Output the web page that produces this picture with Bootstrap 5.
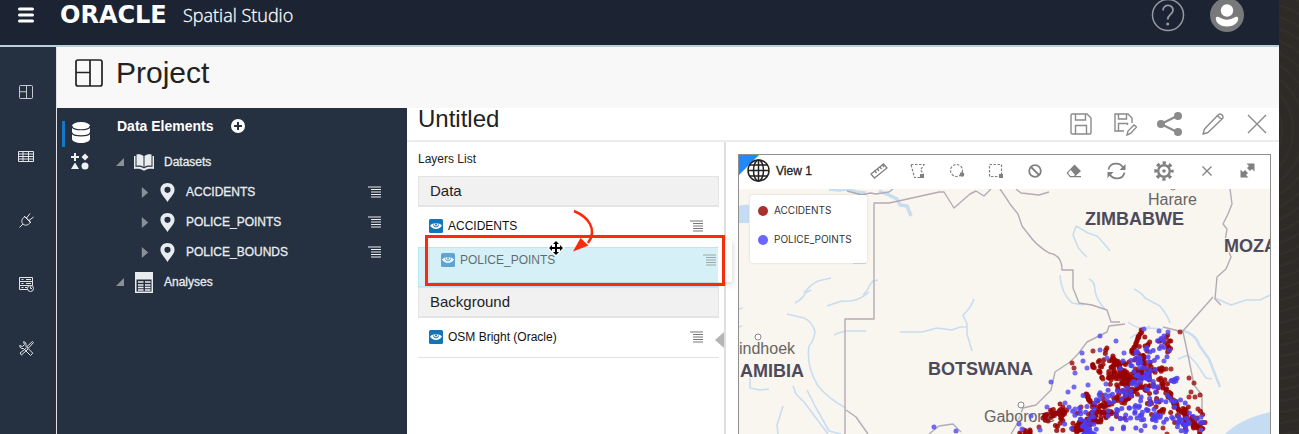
<!DOCTYPE html>
<html lang="en">
<head>
<meta charset="utf-8">
<meta name="viewport" content="width=device-width, initial-scale=1">
<title>Oracle Spatial Studio</title>
<link rel="stylesheet" href="https://cdn.jsdelivr.net/npm/bootstrap@5.3.0/dist/css/bootstrap.min.css">
<style>
  body {
    font-family: "Liberation Sans", Arial, sans-serif;
    font-size: 12px; line-height: 16px; color: #222;
    padding-right: 20px;
    background: #2e2a27 repeating-radial-gradient(circle at right 60px top 130px, transparent 0 8px, #33302c 10px 11px);
  }
  svg { display: block; flex: none; }
  button { background: none; border: 0; padding: 0; color: inherit; display: flex; align-items: center; justify-content: center; }
  .topbar { background: #1c2433; color: #fff; border-bottom: 2px solid #b9cfdc; padding-bottom: 15px; }
  .topbar-row { height: 30px; padding-left: 18px; padding-right: 35px; }
  .wordmark { font: bold 24px/32px "DejaVu Sans", sans-serif; margin-left: 26px; min-width: 116px; }
  .product { font: 300 18px/32px "Open Sans", sans-serif; margin-left: 7px; -webkit-text-stroke: .3px; }
  .account { gap: 25px; }
  .rail { width: 57px; background: #253040; border-right: 1px solid #dfe3e6; color: #e2e6ea; padding-top: 13px; }
  .rail button { height: 64px; width: 52px; }
  .page-head { height: 61px; background: #f8f8f8; padding: 0 18px 9px; gap: 13px; color: #222; }
  .page-head h1 { font-size: 30px; line-height: 36px; font-weight: 400; }
  .elements { width: 350px; background: #253040; color: #e9ecef; flex: none; }
  .tabs-strip { width: 46px; padding-top: 11px; }
  .tabs-strip button { height: 29px; width: 46px; color: #eef0f2; }
  .tabs-strip .current { border-left: 3px solid #1277c4; height: 26px; width: 41px; margin: 2px 0 0 5px; padding: 0 7px 3px 0; }
  .elements h2 { font-size: 14px; line-height: 16px; font-weight: 700; color: #fff; }
  .tree-head { padding: 10px 0 13px 14px; gap: 18px; }
  .tree-row { height: 30px; padding-left: 13px; padding-right: 26px; -webkit-text-stroke: .3px; }
  .tree-row.leaf { padding-left: 38px; }
  .twisty { color: #8a9097; width: 8px; }
  .title-row { height: 34px; border-bottom: 2px solid #ececec; padding-left: 11px; color: #8b8b8b; }
  .title-row h2 { font-size: 24px; line-height: 22px; font-weight: 400; color: #222; align-self: flex-start; }
  .title-row button { width: 44px; height: 31px; }
  .layers { width: 319px; border-right: 2px solid #dedede; padding: 9px 5px 0 11px; flex: none; position: relative; }
  .layers h3 { font-size: 12px; line-height: 16px; font-weight: 400; padding-bottom: 9px; }
  .group-head { height: 31px; background: #f1f1f1; border: 1px solid #e4e4e4; border-bottom-width: 2px; font-size: 15px; padding-left: 11px; padding-bottom: 1px; }
  .layer { height: 40px; padding: 0 16px 2px 11px; color: #111; }
  .layer .eye { margin-right: 5px; }
  .layer > .menu { color: #777; }
  .drop-target { height: 40px; background: #d5f0f7; border: 1px solid #b9e6ef; border-right-color: #fff; position: relative; }
  .dragged { position: absolute; left: 11px; top: -8px; width: 302px; height: 42px; padding-left: 11px; opacity: .6; box-shadow: 1px 2px 5px #8888; background: linear-gradient(#fff 0 7px, transparent 7px) , linear-gradient(90deg, transparent 289px, #fff 289px); }
  .callout-box { position: absolute; left: 6px; top: -13px; width: 300px; height: 51px; border: 3px solid #fa2a0a; }
  .callout-arrow { position: absolute; left: 150px; top: -40px; }
  .pointer { position: absolute; left: 129px; top: -8px; }
  .collapse-tab { position: absolute; right: 0; top: 190px; color: #b5b5b5; }
  .view-pane { padding: 12px 8px 0 12px; }
  .view-box { border: 1px solid #8f8f8f; border-bottom: 0; position: relative; min-height: 0; }
  .view-bar { height: 34px; padding: 0 3px 3px 8px; color: #808080; position: relative; }
  .view-bar::before { content: ""; position: absolute; left: 0; top: 0; border: 10px solid transparent; border-top-color: #2189fb; border-left-color: #2189fb; }
  .view-bar label { color: #222; -webkit-text-stroke: .3px; margin-left: 6px; }
  .view-bar svg { position: relative; }
  .view-bar button { width: 39px; height: 30px; }
  .view-bar .mid { width: 47px; }
  .view-bar .end { width: 40px; }
  .map-area { position: relative; background: #f9f5ef; overflow: hidden; min-height: 0; }
  .legend-card { position: absolute; left: 11px; top: 6px; width: 117px; height: 68px; background: #fff; border-radius: 3px; box-shadow: 0 0 3px #0002; padding: 1px 8px; font: 10px/29px Inter, sans-serif; color: #333; }
  .legend-card ul { margin: 0; padding: 0; list-style: none; }
  .legend-card li { display: flex; align-items: center; gap: 6px; }
  .dot { width: 10px; height: 10px; border-radius: 50%; }
  .map-label text { font-family: "Liberation Sans", Arial, sans-serif; stroke: #f9f5ef; stroke-width: 2; paint-order: stroke; }
  .country { font-size: 18px; font-weight: 700; fill: #4c4a5b; }
  .town { font-size: 16px; fill: #666; }
</style>
</head>
<body class="vh-100 overflow-hidden d-flex flex-column">

<svg width="0" height="0" class="position-absolute" aria-hidden="true">
  <symbol id="i-layout" viewBox="0 0 28 28"><g fill="none" stroke="currentColor" stroke-width="1.700"><rect x="1" y="1" width="26" height="26" rx="2"/><path d="M15 1v26M1 13.500h14"/></g></symbol>
  <symbol id="i-menu" viewBox="0 0 13 12"><path d="M0 1h13M3 3.500h10M3 6h10M3 8.500h10M3 11h10" stroke="currentColor" stroke-width="1.200"/></symbol>
  <symbol id="i-eye" viewBox="0 0 14 14"><rect width="14" height="14" rx="1.500" fill="#1474b8"/><path d="M1 6.500C3.500 3.500 10.500 3.500 13 6.500 10.500 11 3.500 11 1 6.500z" fill="#fff"/><path d="M4.500 5.500a2.500 2.500 0 0 0 5 0" fill="none" stroke="#1474b8"/><circle cx="7" cy="5.500" r="1" fill="#1474b8"/></symbol>
  <symbol id="i-pin" viewBox="0 0 16 22"><path d="M8 1C3.700 1 .6 4 .6 8c0 4.500 5 8.500 7.400 13 2.400-4.500 7.400-8.500 7.400-13 0-4-3.100-7-7.400-7zm0 4a3.200 3.200 0 1 1 0 6.400A3.200 3.200 0 0 1 8 5z" fill="currentColor"/></symbol>
  <symbol id="i-closed" viewBox="0 0 7 12"><path d="M0 0l7 6-7 6z" fill="currentColor"/></symbol>
  <symbol id="i-open" viewBox="0 0 8 8"><path d="M8 0v8H0z" fill="currentColor"/></symbol>
</svg>

<header class="topbar">
  <div class="topbar-row d-flex align-items-center">
    <button aria-label="Menu"><svg width="16" height="16" viewBox="0 0 16 16"><path d="M1.500 2h13M1.500 8h13M1.500 14h13" stroke="currentColor" stroke-width="3" stroke-linecap="round"/></svg></button>
    <span class="wordmark">ORACLE</span><span class="product">Spatial Studio</span>
    <div class="account ms-auto d-flex align-items-center">
      <button aria-label="Help"><svg width="34" height="34" viewBox="0 0 34 34" fill="none" stroke="#959aa1" stroke-width="1.500"><circle cx="17" cy="17" r="15.500"/><path d="M12 12.500c0-7 10.500-6.500 10 0-.4 4-5.300 4-5.300 9" stroke-width="1.800"/><circle cx="16.700" cy="26" r=".8" fill="#959aa1"/></svg></button>
      <button aria-label="Account"><svg width="34" height="34" viewBox="0 0 34 34"><circle cx="17" cy="17" r="17" fill="#77797b"/><circle cx="17" cy="12.500" r="6.200" fill="#fff"/><path d="M5.800 20.500c0-2 2-2 3.500-1.200 5 3.200 10.400 3.200 15.400 0 1.500-.8 3.500-.8 3.500 1.200 0 4.500-5 8-11.200 8s-11.200-3.500-11.200-8z" fill="#fff"/></svg></button>
    </div>
  </div>
</header>

<div class="d-flex flex-fill overflow-hidden">
  <nav class="rail d-flex flex-column flex-shrink-0" aria-label="Sections">
    <button aria-label="Projects"><svg width="14" height="14"><use href="#i-layout"/></svg></button>
    <button aria-label="Datasets"><svg width="16" height="11" viewBox="0 0 16 11"><path d="M.5.500h15v10H.5zM.5 3h15M.5 5.500h15M.5 8h15M5 .5v10M10.500.500v10" fill="none" stroke="currentColor"/></svg></button>
    <button aria-label="Connections"><svg width="15" height="15" viewBox="0 0 15 15" fill="none" stroke="currentColor" stroke-linejoin="round"><path d="M.5 14.500L4 11M6 3.500L11.500 9C9.500 12.500 6 13 4 11S2.500 5.500 6 3.500zM7.500 5l3.500-4.500M10 7.500l4.500-3.500M5 3l7 7"/></svg></button>
    <button aria-label="Jobs"><svg width="15" height="15" viewBox="0 0 15 15" fill="none" stroke="currentColor"><path d="M.5.500h13v4H.5zM.5 4.500h13v4H.5zM9 12.500H.5v-4M2.500 2.500h2M7 2.500h5M2.500 6.500h2M7 6.500h5M2.500 10.500h2M6 10.500h2"/><circle cx="11.500" cy="11.500" r="3" fill="#253040"/><path d="M11.500 9.500v2h1.500"/></svg></button>
    <button aria-label="Tools"><svg width="15" height="15" viewBox="0 0 15 15" fill="none" stroke="currentColor"><path d="M13.500.500L8 5.500l1.500 1.500 5-5.500zM7.500 7L1 12l1.500 2L9 8M4.500.700L5.500 3.500 3.500 5.500.700 4.500c0 2 1.500 3.500 3.800 3l7 7 2.300-2.300-7-7C7.500 2.500 6.500.700 4.500.700z"/></svg></button>
  </nav>

  <main class="d-flex flex-column flex-fill overflow-hidden">
    <div class="page-head d-flex align-items-center">
      <svg width="28" height="28"><use href="#i-layout"/></svg>
      <h1 class="m-0">Project</h1>
    </div>

    <div class="d-flex flex-fill overflow-hidden">
      <aside class="elements d-flex">
        <div class="tabs-strip d-flex flex-column">
          <button class="current" aria-label="Data"><svg width="18" height="21" viewBox="0 0 18 21"><path d="M0 4v13c0 2.200 4 4 9 4s9-1.800 9-4V4z" fill="#fff"/><ellipse cx="9" cy="4" rx="9" ry="4" fill="#fff"/><path d="M0 4c0 5 18 5 18 0M0 10.500c0 4.500 18 4.500 18 0" fill="none" stroke="#253040" stroke-width="1.200"/></svg></button>
          <button aria-label="Functions"><svg width="18" height="17" viewBox="0 0 18 17" fill="currentColor"><path d="M3 0h2v3h3v2H5v3H3V5H0V3h3zM14 .500L17.500 4 14 7.500 10.500 4zM4 9.500L8 16H0z"/><circle cx="14" cy="13" r="3.500"/></svg></button>
        </div>
        <div class="flex-fill">
          <div class="tree-head d-flex align-items-center">
            <h2 class="m-0">Data Elements</h2>
            <button aria-label="Add data"><svg width="14" height="14" viewBox="0 0 14 14"><circle cx="7" cy="7" r="7" fill="#fff"/><path d="M7 3v8M3 7h8" stroke="#253040" stroke-width="2"/></svg></button>
          </div>
          <div class="tree-row d-flex align-items-center"><svg class="twisty" width="8" height="8"><use href="#i-open"/></svg>
            <svg class="ms-2 me-2" width="24" height="17" viewBox="0 0 24 17"><path d="M2 2h1.500v11c4-.5 6.500 0 8.500 1.500 2-1.500 4.500-2 8.500-1.500V2H22v13c-4-.5-8 0-9 1.500h-2C10 15 6 14.500 2 15zM4.500.500c3-.5 5 0 7 1.500v11c-2-1.300-4-1.700-7-1.300zM19.500.500c-3-.5-5 0-7 1.500v11c2-1.300 4-1.700 7-1.300z" fill="currentColor"/></svg>
            <span>Datasets</span></div>
          <div class="tree-row leaf d-flex align-items-center"><svg width="6" height="11" class="twisty"><use href="#i-closed"/></svg><svg class="ms-2 me-2" width="21" height="21"><use href="#i-pin"/></svg><span>ACCIDENTS</span><button class="ms-auto" aria-label="ACCIDENTS menu"><svg width="13" height="12"><use href="#i-menu"/></svg></button></div>
          <div class="tree-row leaf d-flex align-items-center"><svg width="6" height="11" class="twisty"><use href="#i-closed"/></svg><svg class="ms-2 me-2" width="21" height="21"><use href="#i-pin"/></svg><span>POLICE_POINTS</span><button class="ms-auto" aria-label="POLICE_POINTS menu"><svg width="13" height="12"><use href="#i-menu"/></svg></button></div>
          <div class="tree-row leaf d-flex align-items-center"><svg width="6" height="11" class="twisty"><use href="#i-closed"/></svg><svg class="ms-2 me-2" width="21" height="21"><use href="#i-pin"/></svg><span>POLICE_BOUNDS</span><button class="ms-auto" aria-label="POLICE_BOUNDS menu"><svg width="13" height="12"><use href="#i-menu"/></svg></button></div>
          <div class="tree-row d-flex align-items-center"><svg class="twisty" width="8" height="8"><use href="#i-open"/></svg>
            <svg class="ms-2 me-2" width="24" height="21" viewBox="0 0 24 21"><path d="M3 0h18v21H3zM4.500 7.500v12h15v-12z" fill="currentColor" fill-rule="evenodd"/><path d="M6 10h5.500M13 10h5.500M6 13h5.500M13 13h5.500M6 15.500h5.500M13 15.500h5.500M6 18h5.500M13 18h5.500" stroke="currentColor" stroke-width="1.500"/></svg>
            <span>Analyses</span></div>
        </div>
      </aside>

      <section class="d-flex flex-column flex-fill bg-white overflow-hidden">
        <div class="title-row d-flex align-items-center flex-shrink-0">
          <h2 class="mb-0 me-auto">Untitled</h2>
          <button aria-label="Save"><svg width="22" height="22" viewBox="0 0 22 22" fill="none" stroke="currentColor" stroke-width="1.400"><path d="M1 2.500Q1 1 2.500 1H17l4 4v14.500q0 1.500-1.500 1.500h-17Q1 21 1 19.500zM5.500 1v6h10V1M5.500 21v-8.500h11V21"/></svg></button>
          <button aria-label="Save as"><svg width="23" height="23" viewBox="0 0 23 23" fill="none" stroke="currentColor" stroke-width="1.400"><path d="M10 18H1V1h13l4 4v5M4.500 1v5h8V1M4.500 18v-7.500h9V12M13 22l1-4 6-6 2.500 2-6 6.500z"/></svg></button>
          <button aria-label="Share"><svg width="25" height="24" viewBox="0 0 25 24"><path d="M21 3.500L4 12l17 8.500" fill="none" stroke="currentColor" stroke-width="2.200"/><g fill="currentColor"><circle cx="21" cy="4" r="4"/><circle cx="4" cy="12" r="4"/><circle cx="21" cy="20" r="4"/></g></svg></button>
          <button aria-label="Edit"><svg width="22" height="22" viewBox="0 0 22 22" fill="none" stroke="currentColor" stroke-width="1.400" stroke-linejoin="round"><path d="M1 21l1.500-5L16.500 1.500q1.500-1 3 0l1 1q1 1.500 0 3L6 19.500zM15.500 2.500L19.500 6.500"/></svg></button>
          <button aria-label="Close"><svg width="20" height="20" viewBox="0 0 20 20"><path d="M1 1l18 18M19 1L1 19" stroke="currentColor" stroke-width="1.400"/></svg></button>
        </div>

        <div class="d-flex flex-fill overflow-hidden">
          <div class="layers">
            <h3 class="m-0">Layers List</h3>
            <div class="group-head d-flex align-items-center">Data</div>
            <div class="layer d-flex align-items-center"><svg class="eye" width="14" height="14"><use href="#i-eye"/></svg>ACCIDENTS<button class="menu ms-auto" aria-label="ACCIDENTS layer menu"><svg width="13" height="12"><use href="#i-menu"/></svg></button></div>
            <div class="drop-target">
              <div class="dragged layer d-flex align-items-center"><svg class="eye" width="14" height="14"><use href="#i-eye"/></svg>POLICE_POINTS<button class="menu ms-auto" aria-label="POLICE_POINTS layer menu"><svg width="13" height="12"><use href="#i-menu"/></svg></button></div>
              <div class="callout-box"></div>
              <svg class="callout-arrow" width="30" height="45" viewBox="0 0 30 45"><path d="M5 3C19 9 29 21 19 35" fill="none" stroke="#fa2a0a" stroke-width="2.500"/><path d="M4 43.500l7.500-13.500 8 7.500z" fill="#fa2a0a"/></svg>
              <svg class="pointer" width="16" height="16" viewBox="-8 -8 16 16"><path d="M0-7l3 3H1v3h3v-2l3 3-3 3V1H1v3h2L0 7l-3-3h2V1h-3v2l-3-3 3-3v2h3v-3h-2z" stroke="#fff" stroke-width="2" paint-order="stroke"/></svg>
            </div>
            <div class="group-head d-flex align-items-center">Background</div>
            <div class="layer d-flex align-items-center border-bottom"><svg class="eye" width="14" height="14"><use href="#i-eye"/></svg>OSM Bright (Oracle)<button class="menu ms-auto" aria-label="OSM Bright layer menu"><svg width="13" height="12"><use href="#i-menu"/></svg></button></div>
            <button class="collapse-tab" aria-label="Collapse layers"><svg width="9" height="16" viewBox="0 0 9 16"><path d="M9 0v16L0 8z" fill="currentColor"/></svg></button>
          </div>

          <div class="view-pane d-flex flex-column flex-fill overflow-hidden">
            <div class="view-box d-flex flex-column flex-fill">
              <div class="view-bar d-flex align-items-center flex-shrink-0">
                <svg width="23" height="23" viewBox="0 0 23 23" fill="none" stroke="#222" stroke-width="1.500"><circle cx="11.500" cy="11.500" r="10.500" fill="#fff8"/><ellipse cx="11.500" cy="11.500" rx="5" ry="10.500"/><path d="M11.500 1v21M1 11.500h21M2.500 6h18M2.500 17h18"/></svg>
                <label class="me-auto">View 1</label>
                <button aria-label="Measure"><svg width="18" height="16" viewBox="0 0 18 16" fill="none" stroke="currentColor" stroke-width="1.300"><path d="M1 11L13.500 1 17 5 4.500 15zM5 8l1.500 2M7.500 6L9 8M10 4l1.500 2M12.500 2L14 4"/></svg></button>
                <button aria-label="Select by polygon"><svg width="16" height="16" viewBox="0 0 16 16"><path d="M1 1.500h13L10.500 7l3 4M10 14.500H4.500L1 1.500" fill="none" stroke="currentColor" stroke-width="1.200" stroke-dasharray="2.500 1.500"/><path d="M10 11h4v4h-4z" fill="currentColor"/></svg></button>
                <button aria-label="Select by circle"><svg width="16" height="16" viewBox="0 0 16 16"><circle cx="7.500" cy="7.500" r="6" fill="none" stroke="currentColor" stroke-width="1.200" stroke-dasharray="2.500 1.500"/><circle cx="13" cy="11.500" r="2.300" fill="currentColor"/></svg></button>
                <button aria-label="Select by rectangle"><svg width="16" height="16" viewBox="0 0 16 16"><path d="M1.500 1.500h12v12h-12z" fill="none" stroke="currentColor" stroke-width="1.200" stroke-dasharray="2.500 1.500"/><path d="M11 11h4v4h-4z" fill="currentColor"/></svg></button>
                <button aria-label="Clear selection"><svg width="14" height="14" viewBox="0 0 14 14" fill="none" stroke="currentColor" stroke-width="1.800"><circle cx="7" cy="7" r="5.800"/><path d="M3 3l8 8"/></svg></button>
                <button aria-label="Erase"><svg width="16" height="14" viewBox="0 0 16 14"><path d="M8.500.500L15 7 9.500 12H15v1.300H4L.5 9z" fill="currentColor"/><path d="M4.800 6L9 11l-1.200 1H4.500L2 9z" fill="#fff"/></svg></button>
                <button class="mid" aria-label="Refresh"><svg width="19" height="18" viewBox="0 0 19 18"><path d="M1.500 7.500C3 0 13 0 16 5.500M17.500 10.500C16 18 6 18 3 12.500" fill="none" stroke="currentColor" stroke-width="1.700"/><path d="M18.500 2v6h-6zM.5 16v-6h6z" fill="currentColor"/></svg></button>
                <button class="mid" aria-label="Settings"><svg width="20" height="20" viewBox="-10 -10 20 20" fill="none" stroke="currentColor"><circle r="5.800" stroke-width="2.400"/><circle r="8.200" stroke-width="3" stroke-dasharray="3.200 3.240" stroke-dashoffset="1.600"/><circle r="1.800" fill="currentColor" stroke="none"/></svg></button>
                <button class="end" aria-label="Close view"><svg width="10" height="10" viewBox="0 0 10 10"><path d="M.5.500l9 9M9.500.500l-9 9" stroke="currentColor" stroke-width="1.300"/></svg></button>
                <button class="end" aria-label="Expand view"><svg width="15" height="15" viewBox="0 0 15 15" fill="currentColor"><path d="M6.500.500h8v8L12 6l-2 2-3-3 2-2zM.5 6.500v8h8L6 12l2-2-3-3-2 2z"/></svg></button>
              </div>

              <div class="map-area flex-fill">
                <svg class="w-100 h-100" viewBox="739 189 531 245" preserveAspectRatio="xMinYMin slice" role="img" aria-label="Map of southern Africa">
                  <g fill="#c5dcf2"><path d="M739 206q5-2 10-1v18h-10zM1225 434q15-15 45-22v22zM853 263h13v1h-13z"/></g>
                  <g fill="none" stroke="#c8def0" stroke-width="1.600" stroke-linejoin="round">
                    <path d="M829 189l10 1 8-1 9 3 10 1M879 191l10 4 8 4 3 6 7 1 4 10" stroke-width="3.500"/>
                    <path d="M804 293q7-9 14-12l13-3M795 303q9-5 10-10l6-3M863 295q6-6 6-9l4-5 5-1M827 306l15-5q15 2 27-9M787 314l17 4q8 3 11 14-1 8-6 14-3 20 9 40 12 14 28 22M834 335q8-4 15-4h17M900 332h22l15-4 15 2 8-3h7M974 299q-3 9-11 16l4 9v10l5 17M793 386l3 8 8 8 24 32M807 390l8 16 14 25 12 3M783 406l-6 19 1 9M750 377v11l10 2 9-1M739 309l4-1M739 327l3-1"/>
                    <path d="M1076 226l-3 9 4 10q2 5 10 12M1076 226l12 7 9 3q6 6 13 15M1060 275q1 18 12 28l12 2M1089 279q6 2 6 12 2 10 10 18M1134 289q8 4 11 9l15 8q8 10 10 17M1215 298l16 7 15-5h14l10-5M1128 322q10 8 20 6l15 1M1130 338l20-12M1178 359l10-4 8 8 10 15 6 1"/>
                    <path d="M1181 330q15 4 18 15l10 14 11 28" stroke-width="2.500"/>
                  </g>
                  <g fill="none" stroke="#b3acb6" stroke-width="1.400" stroke-linejoin="round">
                    <path d="M847 191l15 4 8-2 6 1 13-2 4-3M845 434V319h29V203h15l14-3 36-8h5l10 16 16-14 6-3 8 5 7-7M1000 189q7 10 10 15l8 10 4 12 7 9q7 10 20 18 13 2 13 17h11v18l6 15 13 2 15 5 4 12h9M1016 189l5 4 18 2 10-3M1230 189l2 15-4 10-5 10 4 5-2 12 6 16-5 12-9 8-2 22 6 6M1213 297l-31 35M1163 327l20 5 6 28 5 25 8 10v39M1125 324l-16 2-2 6-20 10-9 12-8 8-15 10-4 18-15 15-13 3-6 16-6 10M846 410l10 7 12 17M929 434l10-8 14-2 8 8"/>
                  </g>
                  <g class="map-label">
                    <circle cx="1173" cy="187" r="3" fill="none" stroke="#888"/><circle cx="758" cy="337" r="3" fill="#fff" stroke="#888"/><circle cx="1021" cy="405" r="3" fill="#fff" stroke="#888"/>
                    <text class="town" x="1148" y="205">Harare</text>
                    <text class="country" x="1085" y="225">ZIMBABWE</text>
                    <text class="country" x="1224" y="252">MOZA</text>
                    <text class="town" x="739" y="354">indhoek</text>
                    <text class="country" x="740" y="377">AMIBIA</text>
                    <text class="country" x="928" y="375">BOTSWANA</text>
                    <text class="town" x="984" y="422">Gaborone</text>
                  </g>
                  <g id="points"></g>
                </svg>
                <div class="legend-card">
                  <ul>
                    <li><span class="dot" style="background:#a83030"></span>ACCIDENTS</li>
                    <li><span class="dot" style="background:#6a66ff"></span>POLICE_POINTS</li>
                  </ul>
                </div>
              </div>
            </div>
          </div>
        </div>
      </section>
    </div>
  </main>
</div>

<script src="https://cdn.jsdelivr.net/npm/bootstrap@5.3.0/dist/js/bootstrap.bundle.min.js"></script>
<script>
  // Point runs: x1, y1, x2, y2, spread, count. Points lie along each run, scattered by the spread.
  const accidents = [
    [1142,331,1131,352,1,16], [1110,362,1124,382,9,70], [1120,388,1146,370,5,30], [1086,394,1090,402,1,8],
    [1092,407,1130,396,4,34], [1125,396,1142,388,4,16], [1098,412,1112,412,2,10], [1094,416,1076,431,5,44],
    [1046,416,1064,414,4,28], [1064,404,1060,432,4,16], [1140,350,1146,378,8,28], [1160,378,1175,404,3,24],
    [1176,408,1196,426,9,44], [1164,338,1168,350,5,12], [1142,384,1160,392,6,12], [1195,422,1201,430,5,14],
    [1020,432,1035,434,4,12], [1150,404,1160,410,6,12], [1148,338,1148,348,3,5], [1112,356,1113,360,1,4],
    [1092,364,1094,368,1,5], [1100,366,1104,376,3,8], [1140,364,1164,372,5,14], [1080,420,1120,414,6,24],
    [1104,353,1107,348,1,3]
  ];
  const police = [
    [1136,358,1156,352,8,16], [1158,336,1168,352,6,10], [1136,370,1154,384,8,22], [1130,384,1154,376,6,12],
    [1150,404,1160,420,9,16], [1084,428,1094,434,6,22], [1070,420,1100,414,10,20], [1110,416,1150,414,10,28],
    [1112,396,1146,392,8,14], [1172,381,1176,380,2,6], [1174,416,1186,434,7,20], [1086,412,1116,390,9,12],
    [1120,362,1146,362,6,8], [1160,402,1178,400,6,12], [1190,420,1202,422,6,7], [1130,422,1150,424,8,8]
  ];
  const lone = {
    a: [[1180,332],[1093,351],[1072,363],[1074,368],[1189,378],[1194,383],[1191,392],[1189,397],[1200,395],[1195,397],[1169,351],[1166,369],[1171,369],[1103,379],[1102,395],[1081,407],[1198,409],[1163,428],[1167,434],[1039,427]],
    b: [[1144,329],[1159,331],[1168,332],[1100,336],[1116,341],[1082,353],[1100,350],[1083,361],[1087,368],[1075,373],[1107,358],[1124,353],[1051,382],[1068,392],[1074,387],[1088,385],[1106,384],[1047,407],[1065,403],[1075,409],[1031,416],[1019,424],[1022,429],[1040,430],[934,427],[956,431],[1164,361],[1107,399],[1201,430],[1201,417]]
  };
  let seed = 11;
  const rnd = () => (seed = (seed * 16807) % 2147483647) / 2147483647;
  const jitter = s => (rnd() + rnd() - 1) * s * 1.5;
  const spread = runs => runs.flatMap(([x1, y1, x2, y2, s, n]) => Array.from({length: n}, (_, i) => {
    const t = n > 1 ? i / (n - 1) : 0;
    return [x1 + (x2 - x1) * t + jitter(s), y1 + (y2 - y1) * t + jitter(s)];
  }));
  const all = [
    ...spread(accidents).map(p => [...p, '#990000']), ...lone.a.map(p => [...p, '#a01818']),
    ...spread(police).map(p => [...p, '#4b3df0']), ...lone.b.map(p => [...p, '#5a50f5'])
  ];
  document.getElementById('points').innerHTML = all.map(([x, y, c]) =>
    `<circle cx="${x.toFixed(1)}" cy="${y.toFixed(1)}" r="2.500" fill="${c}" fill-opacity=".85"/>`).join('');
</script>
</body>
</html>
